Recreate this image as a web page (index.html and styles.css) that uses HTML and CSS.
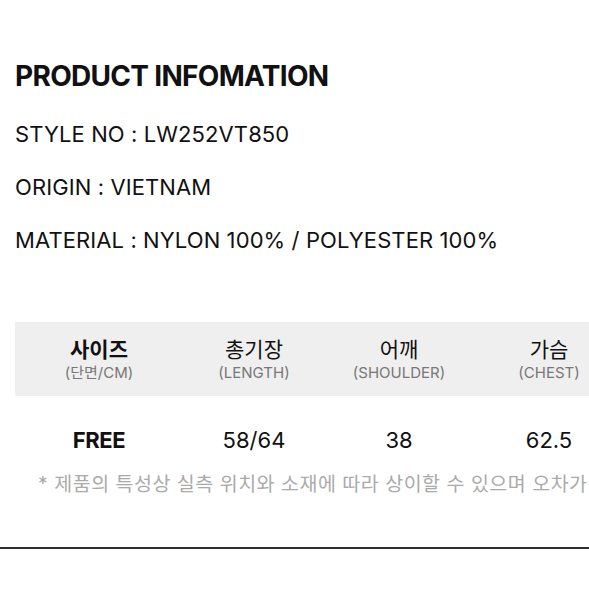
FILE: index.html
```html
<!DOCTYPE html>
<html lang="ko">
<head>
<meta charset="utf-8">
<link rel="stylesheet" href="styles.css">
</head>
<body>
<div class="page">
  <section class="info">
    <h1 class="title">PRODUCT INFOMATION</h1>
    <p class="line">STYLE NO : LW252VT850</p>
    <p class="line">ORIGIN : VIETNAM</p>
    <p class="line">MATERIAL : NYLON 100% / POLYESTER 100%</p>
  </section>
  <section class="size">
    <div class="head">
      <div class="cell"><span class="ko strong">사이즈</span><span class="en">(단면/CM)</span></div>
      <div class="cell"><span class="ko">총기장</span><span class="en">(LENGTH)</span></div>
      <div class="cell"><span class="ko">어깨</span><span class="en">(SHOULDER)</span></div>
      <div class="cell"><span class="ko">가슴</span><span class="en">(CHEST)</span></div>
    </div>
    <div class="row">
      <div class="cell strong">FREE</div>
      <div class="cell">58/64</div>
      <div class="cell">38</div>
      <div class="cell">62.5</div>
    </div>
    <p class="note">* 제품의 특성상 실측 위치와 소재에 따라 상이할 수 있으며 오차가</p>
  </section>
  <hr class="rule">
</div>
</body>
</html>
```
FILE: styles.css
```css
html, body {
  margin: 0;
  padding: 0;
  background: #fff;
}
body {
  font-family: "Inter", "Noto Sans CJK KR", sans-serif;
  color: #111;
  overflow: hidden;
}
.page {
  width: 589px;
  overflow: hidden;
}
.info {
  padding: 58px 0 0 15px;
}
.title {
  margin: 0 0 14px;
  font-size: 28px;
  line-height: 36px;
  font-weight: 700;
  letter-spacing: -0.7px;
}
.line {
  margin: 0;
  font-size: 22px;
  line-height: 53px;
  letter-spacing: 0.1px;
  font-weight: 400;
}
.size {
  margin-top: 55px;
  padding-left: 15px;
}
.head, .row {
  display: grid;
  grid-template-columns: 168px 142px 148px 152px;
  width: 610px;
}
.head {
  background: #efefef;
  height: 74px;
  align-items: center;
}
.head .cell {
  display: flex;
  flex-direction: column;
  align-items: center;
}
.ko {
  font-size: 21px;
  line-height: 27px;
  color: #111;
}
.ko.strong {
  font-weight: 700;
}
.en {
  font-size: 15px;
  line-height: 20px;
  color: #777;
  letter-spacing: 0;
}
.row {
  height: 88px;
  align-items: center;
}
.row .cell {
  text-align: center;
  font-size: 22px;
  color: #111;
}
.row .strong {
  font-weight: 700;
  letter-spacing: -0.4px;
}
.note {
  margin: -13px 0 0 23px;
  font-size: 19.5px;
  line-height: 26px;
  letter-spacing: 0.5px;
  color: #aaa;
  white-space: nowrap;
}
.rule {
  margin: 50px 0 0;
  border: 0;
  height: 2px;
  background: #2e2e2e;
}
```
